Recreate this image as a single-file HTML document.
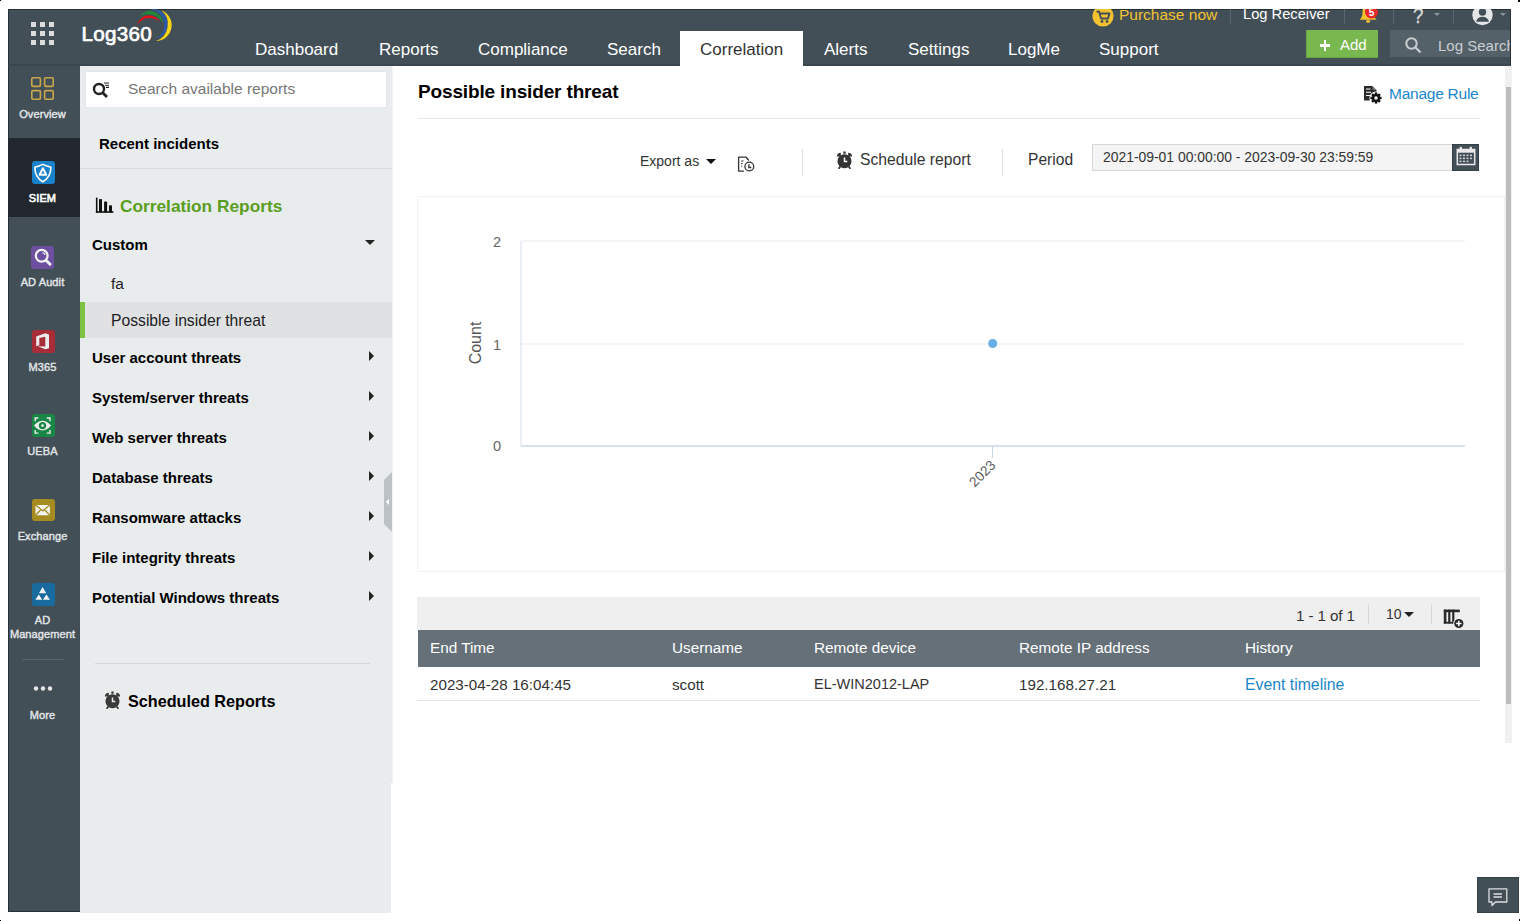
<!DOCTYPE html>
<html><head><meta charset="utf-8">
<style>
*{box-sizing:border-box;margin:0;padding:0}
html,body{width:1520px;height:921px;overflow:hidden;background:#fff;font-family:"Liberation Sans",sans-serif}
.a{position:absolute}
.t{position:absolute;white-space:nowrap;line-height:1}
#hdr{position:absolute;left:8px;top:9px;width:1503px;height:57px;background:#434f57;border-top:1px solid #263038;border-right:1px solid #263038;border-left:1px solid #263038;border-bottom:2px solid #3b474e}
.nav{position:absolute;top:41px;font-size:17px;color:#fff;white-space:nowrap;line-height:1}
.sbl{position:absolute;left:6.5px;width:72px;text-align:center;color:#e2e5e7;font-size:11px;letter-spacing:0.1px;-webkit-text-stroke:0.4px #e2e5e7;line-height:1;white-space:nowrap}
.ico{position:absolute;left:31px;width:23px;height:23px;border-radius:3px}
.lpi{position:absolute;left:92px;font-size:15px;font-weight:bold;color:#000;white-space:nowrap;line-height:1}
.rc{position:absolute;left:369px;width:0;height:0;border-top:5px solid transparent;border-bottom:5px solid transparent;border-left:5px solid #222}
.th{position:absolute;top:640px;font-size:15.3px;color:#fff;white-space:nowrap;line-height:1}
.td{position:absolute;top:677px;font-size:15.2px;color:#333;white-space:nowrap;line-height:1}
</style></head><body>
<!-- corner marks -->
<div class="a" style="left:0;top:0;width:1px;height:1px;background:#000"></div><div class="a" style="left:1518px;top:0;width:2px;height:2px;background:#000"></div><div class="a" style="left:0;top:920px;width:1px;height:1px;background:#000"></div><div class="a" style="left:1519px;top:919px;width:1px;height:2px;background:#000"></div>

<!-- HEADER -->
<div id="hdr"></div>
<svg class="a" style="left:31px;top:22px" width="24" height="24" viewBox="0 0 24 24" fill="#dcdcdc">
  <rect x="0" y="0" width="5" height="5"/><rect x="9" y="0" width="5" height="5"/><rect x="18" y="0" width="5" height="5"/>
  <rect x="0" y="9" width="5" height="5"/><rect x="9" y="9" width="5" height="5"/><rect x="18" y="9" width="5" height="5"/>
  <rect x="0" y="18" width="5" height="5"/><rect x="9" y="18" width="5" height="5"/><rect x="18" y="18" width="5" height="5"/>
</svg>
<div class="t" style="left:81.5px;top:24px;font-size:20.6px;color:#fff;letter-spacing:0.3px;-webkit-text-stroke:0.7px #fff">Log360</div>
<svg class="a" style="left:130px;top:9px" width="50" height="36" viewBox="130 9 50 36">
  <path d="M137.2 25.4 A12.17 12.17 0 0 1 160 22 A14.58 14.58 0 0 0 137.2 25.4 Z" fill="#e3131b"/>
  <path d="M139.1 16.7 A13.42 13.42 0 0 1 163.4 23.7 A17.05 17.05 0 0 0 139.1 16.7 Z" fill="#1f8a3a"/>
  <path d="M148.7 9.3 A15.24 15.24 0 0 1 156 38.9 A15.73 15.73 0 0 0 148.7 9.3 Z" fill="#2c5aa8"/>
  <path d="M161.3 10.2 A15.89 15.89 0 0 1 156 41 A18.00 18.00 0 0 0 161.3 10.2 Z" fill="#f7d417"/>
</svg>
<div class="nav" style="left:255px">Dashboard</div>
<div class="nav" style="left:379px">Reports</div>
<div class="nav" style="left:478px">Compliance</div>
<div class="nav" style="left:607px">Search</div>
<div class="a" style="left:680px;top:31px;width:123px;height:35px;background:#fff"></div>
<div class="nav" style="left:700px;color:#333">Correlation</div>
<div class="nav" style="left:824px">Alerts</div>
<div class="nav" style="left:908px">Settings</div>
<div class="nav" style="left:1008px">LogMe</div>
<div class="nav" style="left:1099px">Support</div>

<!-- top right strip (clipped at header top) -->
<div class="a" style="left:1080px;top:9px;width:431px;height:22px;overflow:hidden">
  <svg class="a" style="left:12px;top:-4px" width="22" height="22" viewBox="0 0 22 22">
    <circle cx="11" cy="11" r="10.6" fill="#f2c230"/>
    <path d="M4.5 6.5 L7 6.5 L9 13.5 L16 13.5 L17.5 8.5 L8 8.5" stroke="#434f57" stroke-width="1.9" fill="none" stroke-linejoin="round"/>
    <circle cx="10" cy="16.5" r="1.4" fill="#434f57"/><circle cx="15" cy="16.5" r="1.4" fill="#434f57"/>
  </svg>
  <div class="t" style="left:39px;top:-2px;font-size:15.5px;color:#f2c230">Purchase now</div>
  <div class="a" style="left:150px;top:0;width:1px;height:15px;background:#5b676f"></div>
  <div class="t" style="left:163px;top:-2px;font-size:14.7px;color:#fff">Log Receiver</div>
  <div class="a" style="left:264px;top:0;width:1px;height:15px;background:#5b676f"></div>
  <svg class="a" style="left:278px;top:-9px" width="24" height="26" viewBox="0 0 24 26">
    <path d="M1.5 19.8 Q4.5 17.8 4.5 12 Q4.5 5 10.1 5 Q15.7 5 15.7 12 Q15.7 17.8 18.7 19.8 Z" fill="#f2c230"/>
    <ellipse cx="10.1" cy="21.3" rx="2" ry="1.5" fill="#f2c230"/>
    <circle cx="13.5" cy="12" r="6.5" fill="#e8262b"/>
    <text x="13.5" y="15.8" font-size="10" font-weight="bold" fill="#fff" text-anchor="middle" font-family="Liberation Sans">5</text>
  </svg>
  <div class="a" style="left:313px;top:0;width:1px;height:15px;background:#5b676f"></div>
  <div class="t" style="left:332.5px;top:-4px;font-size:22px;color:#dcdcdc;transform:scaleX(0.85);transform-origin:0 0;-webkit-text-stroke:0.3px #dcdcdc">?</div>
  <div class="a" style="left:353.5px;top:4.3px;width:0;height:0;border-left:3px solid transparent;border-right:3px solid transparent;border-top:3px solid #8a959c"></div>
  <div class="a" style="left:373px;top:0;width:1px;height:15px;background:#5b676f"></div>
  <svg class="a" style="left:391px;top:-5px" width="22" height="22" viewBox="0 0 22 22">
    <circle cx="11.5" cy="11" r="10.2" fill="#e4e6e8"/>
    <circle cx="11.5" cy="8" r="3.7" fill="#434f57"/>
    <path d="M5 17.8 Q6.5 12.8 11.5 12.8 Q16.5 12.8 18 17.8 Z" fill="#434f57"/>
  </svg>
  <div class="a" style="left:419.5px;top:4.3px;width:0;height:0;border-left:3px solid transparent;border-right:3px solid transparent;border-top:3px solid #8a959c"></div>
</div>
<!-- Add button -->
<div class="a" style="left:1306px;top:30px;width:72px;height:28px;background:#78b84e;border-left:1px solid #67a53f;border-bottom:1px solid #67a53f"></div>
<div class="a" style="left:1319.5px;top:44.3px;width:10.5px;height:2.6px;background:#fff"></div>
<div class="a" style="left:1323.5px;top:40.2px;width:2.6px;height:10.6px;background:#fff"></div>
<div class="t" style="left:1340px;top:37px;font-size:15px;color:#fff">Add</div>
<!-- log search -->
<div class="a" style="left:1390px;top:30px;width:120px;height:27px;background:#556169"></div>
<svg class="a" style="left:1404px;top:36px" width="18" height="18" viewBox="0 0 18 18">
  <circle cx="7.5" cy="7.5" r="5.2" stroke="#c9cdd0" stroke-width="2" fill="none"/>
  <path d="M11.3 11.3 L16.5 16.5" stroke="#c9cdd0" stroke-width="2.2"/>
</svg>
<div class="a" style="left:1390px;top:30px;width:120px;height:27px;overflow:hidden"><div class="t" style="left:48px;top:8px;font-size:15px;color:#c9ced1">Log Search</div></div>

<!-- SIDEBAR -->
<div class="a" style="left:8px;top:66px;width:72px;height:846px;background:#434f57;border-left:1px solid #263038;border-bottom:1px solid #263038"></div>
<div class="a" style="left:8px;top:138px;width:72px;height:79px;background:#21272d"></div>
<svg class="a" style="left:31px;top:77px" width="23" height="23" viewBox="0 0 23 23" fill="none" stroke="#c9a84a" stroke-width="1.6">
  <rect x="0.8" y="0.8" width="8.6" height="8.6" rx="1.2"/><rect x="13.6" y="0.8" width="8.6" height="8.6" rx="1.2"/>
  <rect x="0.8" y="13.6" width="8.6" height="8.6" rx="1.2"/><rect x="13.6" y="13.6" width="8.6" height="8.6" rx="1.2"/>
</svg>
<div class="sbl" style="top:109px">Overview</div>
<div class="ico" style="left:31.5px;top:161px;background:#1a82ca"></div>
<svg class="a" style="left:31px;top:161px" width="23" height="23" viewBox="0 0 23 23" fill="none" stroke="#fff" stroke-width="1.6">
  <path d="M3.8 6.2 Q8 5.2 11.8 3.4 Q15.6 5.2 19.9 6.2 C19.9 13 16.5 18 11.8 20.7 C7.1 18 3.8 13 3.8 6.2 Z" stroke-linejoin="round"/>
  <path d="M11.9 7.3 L15.2 13.8 L8.6 13.8 Z" stroke-width="1.9" stroke-linejoin="round"/>
</svg>
<div class="sbl" style="top:193px;color:#fff;-webkit-text-stroke:0.6px #fff">SIEM</div>
<div class="ico" style="top:246px;background:#6d4fa0"></div>
<svg class="a" style="left:31px;top:246px" width="23" height="23" viewBox="0 0 23 23" fill="none" stroke="#f2f2f2">
  <circle cx="10.7" cy="9.8" r="5.9" stroke-width="2.2"/><path d="M15 14.2 L19 18.2" stroke-width="2.9" stroke-linecap="round"/>
  <path d="M11.5 6.6 A3.4 3.4 0 0 1 14 8.8" stroke-width="1.3"/>
</svg>
<div class="sbl" style="top:277px">AD Audit</div>
<div class="ico" style="left:31.5px;top:330px;background:#a82d39"></div>
<svg class="a" style="left:31px;top:330px" width="23" height="23" viewBox="0 0 23 23" fill="#ececec" fill-rule="evenodd">
  <path d="M5.2 6.6 L14.3 3.3 L18 4.4 L18 18.3 L14.3 19.2 L6.8 16.2 L14.3 16.6 L14.3 6.8 L8.3 8 L8.3 15.3 L5.2 16.3 Z"/>
</svg>
<div class="sbl" style="top:362px">M365</div>
<div class="ico" style="left:31.5px;top:414.3px;background:#1a8646"></div>
<svg class="a" style="left:31px;top:414px" width="23" height="23" viewBox="0 0 23 23">
  <path d="M2.9 11.6 Q11.5 1.8 20.1 11.6 Q11.5 21.4 2.9 11.6 Z" fill="#eee"/>
  <circle cx="11.5" cy="11.6" r="3.7" fill="#1a8646"/><circle cx="11.5" cy="11.6" r="1.3" fill="#fff"/>
  <path d="M4.2 7.2 V4 H7.3 M15.8 4 H19 V7.2 M19 15.9 V19.1 H15.8 M7.3 19.1 H4.2 V15.9" stroke="#eee" stroke-width="1.4" fill="none"/>
</svg>
<div class="sbl" style="top:446px">UEBA</div>
<div class="ico" style="left:31.5px;top:499px;height:22px;background:#a68c20"></div>
<svg class="a" style="left:31px;top:498px" width="23" height="23" viewBox="0 0 23 23">
  <rect x="4.5" y="7" width="14.4" height="10.2" rx="0.6" fill="#f4f4f4"/>
  <path d="M4.5 7 L11.7 12.8 L18.9 7 M4.5 17.2 L10 11.5 M18.9 17.2 L13.4 11.5" stroke="#a68c20" stroke-width="1.3" fill="none"/>
</svg>
<div class="sbl" style="top:531px">Exchange</div>
<div class="ico" style="left:31.5px;top:583px;background:#196a9f"></div>
<svg class="a" style="left:31px;top:583px" width="23" height="23" viewBox="0 0 23 23" fill="#f4f4f4">
  <path d="M11.6 4 L15.2 10.2 L8 10.2 Z M7.8 11.6 L11.3 16.8 L4.3 16.8 Z M15.4 11.6 L18.9 16.8 L11.9 16.8 Z"/>
</svg>
<div class="sbl" style="top:615px">AD</div>
<div class="sbl" style="top:629px">Management</div>
<div class="a" style="left:22px;top:659px;width:42px;height:1px;background:#58646b"></div>
<svg class="a" style="left:33px;top:685px" width="20" height="7" viewBox="0 0 20 7" fill="#e6e6e6">
  <circle cx="3" cy="3.5" r="2.2"/><circle cx="10" cy="3.5" r="2.2"/><circle cx="17" cy="3.5" r="2.2"/>
</svg>
<div class="sbl" style="top:710px">More</div>

<!-- LEFT PANEL -->
<div class="a" style="left:80px;top:66px;width:312px;height:847px;background:#e9eced"></div><div class="a" style="left:391px;top:783px;width:1px;height:130px;background:#fff"></div><div class="a" style="left:392px;top:66px;width:1px;height:717px;background:#f3f4f5"></div>
<div class="a" style="left:85px;top:71px;width:302px;height:37px;background:#fff;border:1px solid #e3e6e8"></div>
<svg class="a" style="left:92px;top:81px" width="19" height="18" viewBox="0 0 19 18">
  <circle cx="7" cy="8" r="5" stroke="#222" stroke-width="2.4" fill="none"/>
  <path d="M10.5 11.5 L15 16" stroke="#222" stroke-width="2.8"/>
  <path d="M12 2 H17 M13 4.2 H17 M14 6.4 H17" stroke="#222" stroke-width="1.1"/>
</svg>
<div class="t" style="left:128px;top:81px;font-size:15.5px;color:#777">Search available reports</div>
<div class="lpi" style="left:99px;top:136px">Recent incidents</div>
<div class="a" style="left:80px;top:168px;width:312px;height:1px;background:#d7dcdf"></div>
<svg class="a" style="left:95px;top:197px" width="19" height="17" viewBox="0 0 19 17" fill="#111">
  <rect x="0.9" y="0.6" width="1.6" height="15"/>
  <rect x="4" y="2" width="3" height="13.5" rx="0.8"/><rect x="9.1" y="4.5" width="3" height="11" rx="0.8"/><rect x="14" y="8.3" width="3" height="7.2" rx="0.8"/>
  <rect x="0.9" y="14.2" width="17.5" height="1.6"/>
</svg>
<div class="t" style="left:120px;top:198px;font-size:17.3px;font-weight:bold;color:#5a9e1f">Correlation Reports</div>
<div class="lpi" style="top:237px">Custom</div>
<div class="a" style="left:365px;top:240px;width:0;height:0;border-left:5px solid transparent;border-right:5px solid transparent;border-top:5px solid #222"></div>
<div class="t" style="left:111px;top:276px;font-size:15.5px;color:#222">fa</div>
<div class="a" style="left:80px;top:302px;width:312px;height:36px;background:#dfe1e3"></div>
<div class="a" style="left:80px;top:302px;width:5px;height:36px;background:#7dc242"></div>
<div class="t" style="left:111px;top:313px;font-size:15.7px;color:#222">Possible insider threat</div>
<div class="lpi" style="top:350px">User account threats</div><div class="rc" style="top:351px"></div>
<div class="lpi" style="top:390px">System/server threats</div><div class="rc" style="top:391px"></div>
<div class="lpi" style="top:430px">Web server threats</div><div class="rc" style="top:431px"></div>
<div class="lpi" style="top:470px">Database threats</div><div class="rc" style="top:471px"></div>
<div class="lpi" style="top:510px">Ransomware attacks</div><div class="rc" style="top:511px"></div>
<div class="lpi" style="top:550px">File integrity threats</div><div class="rc" style="top:551px"></div>
<div class="lpi" style="top:590px">Potential Windows threats</div><div class="rc" style="top:591px"></div>
<div class="a" style="left:95px;top:663px;width:275px;height:1px;background:#d2d7da"></div>
<svg class="a" style="left:104px;top:690.5px" width="17" height="18" viewBox="0 0 17 18"><path d="M8.5 3.2 A7 7 0 1 1 8.49 3.2 Z" fill="#3a3a3a"/>
  <path d="M4.8 5.6 L0.9 5.6 A3.9 3.9 0 0 1 4.8 1.7 Z" fill="#3a3a3a"/>
  <path d="M12.2 5.6 L16.1 5.6 A3.9 3.9 0 0 0 12.2 1.7 Z" fill="#3a3a3a"/>
  <rect x="7.3" y="0.5" width="2.4" height="2.2" fill="#3a3a3a"/>
  <path d="M4.3 15.5 L2.6 17.8 M12.7 15.5 L14.4 17.8" stroke="#3a3a3a" stroke-width="1.8"/>
  <path d="M8.5 6.4 V10.4 H11.3" stroke="#e9eced" stroke-width="1.5" fill="none"/></svg>
<div class="t" style="left:128px;top:693px;font-size:16.2px;font-weight:bold;color:#000">Scheduled Reports</div>
<svg class="a" style="left:383px;top:472px" width="9" height="60" viewBox="0 0 9 60">
  <path d="M9 0 V60 L1 52 V8 Z" fill="#bcc1c5"/>
  <path d="M3 30 L6 27 V33 Z" fill="#fff"/>
</svg>

<!-- MAIN -->
<div class="t" style="left:418px;top:82px;font-size:19px;letter-spacing:-0.15px;font-weight:bold;color:#000">Possible insider threat</div>
<svg class="a" style="left:1363px;top:85px" width="20" height="20" viewBox="0 0 20 20">
  <path d="M1 1 H9.5 L13.5 5 V15.5 H1 Z" fill="#2b2b2b"/>
  <path d="M9.5 1 V5 H13.5" fill="#fff" opacity="0.35"/>
  <path d="M3 4 H7.5 M3 7.3 H8 M3 10.5 H7" stroke="#fff" stroke-width="1.1"/>
  <circle cx="13" cy="13" r="6.6" fill="#fff"/>
  <g transform="translate(13 13)" fill="#111">
    <circle r="4"/>
    <rect x="-1.2" y="-5.6" width="2.4" height="11.2"/>
    <rect x="-1.2" y="-5.6" width="2.4" height="11.2" transform="rotate(45)"/>
    <rect x="-1.2" y="-5.6" width="2.4" height="11.2" transform="rotate(90)"/>
    <rect x="-1.2" y="-5.6" width="2.4" height="11.2" transform="rotate(135)"/>
    <circle r="1.7" fill="#fff"/>
  </g>
</svg>
<div class="t" style="left:1389px;top:86px;font-size:15.5px;letter-spacing:-0.25px;color:#1a86c9">Manage Rule</div>
<div class="a" style="left:418px;top:118px;width:1062px;height:1px;background:#e6e6e6"></div>

<div class="t" style="left:640px;top:154px;font-size:14px;color:#333">Export as</div>
<div class="a" style="left:706px;top:158.5px;width:0;height:0;border-left:5px solid transparent;border-right:5px solid transparent;border-top:5px solid #111"></div>
<svg class="a" style="left:737px;top:156px" width="19" height="17" viewBox="0 0 19 17" fill="none" stroke="#333" stroke-width="1.3">
  <path d="M6.5 15.1 H1.6 V1.2 H9 L11.5 4" stroke-linecap="round" stroke-linejoin="round"/>
  <path d="M4.2 5 H6.5 M4.2 7.6 H5.6 M4.2 10.1 H5" stroke-width="1.2"/>
  <circle cx="12.3" cy="10.5" r="4.4"/>
  <path d="M11.9 8.3 V11.5 H14.3" stroke-width="1.4"/>
</svg>
<div class="a" style="left:802px;top:149px;width:1px;height:27px;background:#dcdcdc"></div>
<svg class="a" style="left:836px;top:151px" width="17" height="18" viewBox="0 0 17 18"><path d="M8.5 3.2 A7 7 0 1 1 8.49 3.2 Z" fill="#333"/>
  <path d="M4.8 5.6 L0.9 5.6 A3.9 3.9 0 0 1 4.8 1.7 Z" fill="#333"/>
  <path d="M12.2 5.6 L16.1 5.6 A3.9 3.9 0 0 0 12.2 1.7 Z" fill="#333"/>
  <rect x="7.3" y="0.5" width="2.4" height="2.2" fill="#333"/>
  <path d="M4.3 15.5 L2.6 17.8 M12.7 15.5 L14.4 17.8" stroke="#333" stroke-width="1.8"/>
  <path d="M8.5 6.4 V10.4 H11.3" stroke="#fff" stroke-width="1.5" fill="none"/></svg>
<div class="t" style="left:860px;top:152px;font-size:15.7px;color:#333">Schedule report</div>
<div class="a" style="left:1002px;top:149px;width:1px;height:27px;background:#dcdcdc"></div>
<div class="t" style="left:1028px;top:152px;font-size:15.6px;color:#333">Period</div>
<div class="a" style="left:1092px;top:144px;width:361px;height:27px;background:#f4f4f4;border:1px solid #d6d6d6;border-right:none"></div>
<div class="t" style="left:1103px;top:150.5px;font-size:13.9px;color:#333">2021-09-01 00:00:00 - 2023-09-30 23:59:59</div>
<div class="a" style="left:1452px;top:144px;width:27px;height:27px;background:#434f57;border:1px solid #364047"></div>
<svg class="a" style="left:1456px;top:146px" width="20" height="20" viewBox="0 0 20 20">
  <path d="M1.3 3.5 H18.7 V18.6 H1.3 Z" fill="none" stroke="#e8e8e8" stroke-width="1.5"/>
  <rect x="1.3" y="3.5" width="17.4" height="3.2" fill="#e8e8e8"/>
  <rect x="3.6" y="0.8" width="2.4" height="4.6" rx="0.8" fill="#e8e8e8"/><rect x="13.6" y="0.8" width="2.4" height="4.6" rx="0.8" fill="#e8e8e8"/>
  <g fill="#cfd3d6"><rect x="3.5" y="8.6" width="2" height="1.5"/><rect x="7" y="8.6" width="2" height="1.5"/><rect x="10.5" y="8.6" width="2" height="1.5"/><rect x="14" y="8.6" width="2" height="1.5"/>
  <rect x="3.5" y="11.6" width="2" height="1.5"/><rect x="7" y="11.6" width="2" height="1.5"/><rect x="10.5" y="11.6" width="2" height="1.5"/><rect x="14" y="11.6" width="2" height="1.5"/>
  <rect x="3.5" y="14.6" width="2" height="1.5"/><rect x="7" y="14.6" width="2" height="1.5"/><rect x="10.5" y="14.6" width="2" height="1.5"/></g>
</svg>

<!-- chart -->
<div class="a" style="left:417px;top:196px;width:1088px;height:376px;border:1px solid #f2f2f2;background:#fff"></div>
<svg class="a" style="left:0;top:0" width="1520" height="921" viewBox="0 0 1520 921">
  <line x1="521" y1="241" x2="1465" y2="241" stroke="#ececec" stroke-width="1.2"/>
  <line x1="521" y1="344" x2="1465" y2="344" stroke="#ececec" stroke-width="1.2"/>
  <line x1="521" y1="446" x2="1465" y2="446" stroke="#ccd6eb" stroke-width="1.5"/>
  <line x1="521" y1="241" x2="521" y2="446" stroke="#dde3ee" stroke-width="1.2"/>
  <line x1="992.5" y1="446" x2="992.5" y2="458" stroke="#ccd6eb" stroke-width="1"/>
  <circle cx="992.7" cy="343.5" r="4.5" fill="#6aaee6"/>
  <text x="501.2" y="247.3" font-size="14.6" fill="#666" text-anchor="end" font-family="Liberation Sans">2</text>
  <text x="501.2" y="350.3" font-size="14.6" fill="#666" text-anchor="end" font-family="Liberation Sans">1</text>
  <text x="501.2" y="451.3" font-size="14.6" fill="#666" text-anchor="end" font-family="Liberation Sans">0</text>
  <text x="0" y="0" font-size="16" fill="#555" text-anchor="middle" font-family="Liberation Sans" transform="translate(481.2,343) rotate(-90)">Count</text>
  <text x="0" y="0" font-size="13.8" fill="#5a5a5a" text-anchor="end" font-family="Liberation Sans" transform="translate(996.5,466) rotate(-45)">2023</text>
</svg>

<!-- table -->
<div class="a" style="left:417px;top:597px;width:1063px;height:33px;background:#efefef"></div>
<div class="t" style="left:1296px;top:608px;font-size:15.2px;letter-spacing:-0.1px;color:#333">1 - 1 of 1</div>
<div class="a" style="left:1368px;top:604px;width:1px;height:20px;background:#d6d6d6"></div>
<div class="t" style="left:1386px;top:607px;font-size:14px;color:#333">10</div>
<div class="a" style="left:1404px;top:612px;width:0;height:0;border-left:5px solid transparent;border-right:5px solid transparent;border-top:5px solid #222"></div>
<div class="a" style="left:1431px;top:604px;width:1px;height:20px;background:#d6d6d6"></div>
<svg class="a" style="left:1443px;top:609px" width="22" height="21" viewBox="0 0 22 21" fill="#2a2a2a">
  <rect x="0.8" y="0.6" width="16" height="2.6"/>
  <rect x="0.8" y="0.6" width="2.6" height="14"/><rect x="5.2" y="0.6" width="2.2" height="14"/><rect x="9.2" y="0.6" width="2.2" height="14"/>
  <rect x="0.8" y="12.8" width="11" height="1.8"/>
  <circle cx="15.8" cy="14.5" r="5.6" fill="#efefef"/>
  <circle cx="15.8" cy="14.5" r="4.6"/>
  <path d="M15.8 11.8 V17.2 M13.1 14.5 H18.5" stroke="#fff" stroke-width="1.5"/>
</svg>
<div class="a" style="left:418px;top:630px;width:1062px;height:37px;background:#657079"></div>
<div class="th" style="left:430px">End Time</div>
<div class="th" style="left:672px">Username</div>
<div class="th" style="left:814px">Remote device</div>
<div class="th" style="left:1019px">Remote IP address</div>
<div class="th" style="left:1245px">History</div>
<div class="a" style="left:417px;top:700px;width:1063px;height:1px;background:#e3e3e3"></div>
<div class="td" style="left:430px">2023-04-28 16:04:45</div>
<div class="td" style="left:672px">scott</div>
<div class="td" style="left:814px;font-size:14.5px">EL-WIN2012-LAP</div>
<div class="td" style="left:1019px">192.168.27.21</div>
<div class="td" style="left:1245px;color:#1a86c9;font-size:15.8px">Event timeline</div>

<!-- scrollbar -->
<div class="a" style="left:1505px;top:66px;width:7px;height:677px;background:#f1f1f1"></div>
<div class="a" style="left:1506px;top:87px;width:5px;height:617px;background:#bdbdbd"></div>

<!-- chat button -->
<div class="a" style="left:1477px;top:877px;width:42px;height:36px;background:#434f57;border:1px solid #364047"></div>
<svg class="a" style="left:1487px;top:887px" width="22" height="20" viewBox="0 0 22 20" fill="none" stroke="#e0e0e0" stroke-width="1.3">
  <path d="M2 1.8 H19.8 V15 H8.5 L5 18.5 V15 H2 Z" stroke-linejoin="round"/>
  <path d="M6.5 7 H15 M6.5 10 H15" stroke-width="1.6"/>
</svg>
</body></html>
